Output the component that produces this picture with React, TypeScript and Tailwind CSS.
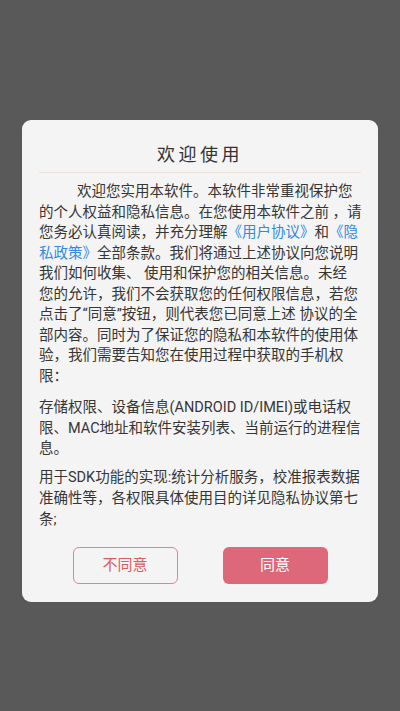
const textFont = { fontFamily: 'Roboto, "Noto Sans CJK SC", sans-serif' };

function Link({ children }: { children: React.ReactNode }) {
  return <span className="text-[#2f8ae5]">{children}</span>;
}

export default function App() {
  return (
    <div
      className="flex h-[711px] w-full items-start justify-center bg-[#595959] pt-[120px]"
      style={textFont}
    >
      <div className="flex h-[482px] w-[356px] flex-col rounded-[9px] bg-[#f4f4f4] px-[17px] pt-[23px] pb-[18px]">
        <h1 className="text-center text-[18px] leading-[24px] tracking-[3.5px] text-[#333]">
          欢迎使用
        </h1>
        <div className="mt-[5px] h-px bg-[#ebe1d6]" />

        <div className="mt-[9px] text-[14.5px] leading-[20.5px] whitespace-nowrap text-[#363636]">
          <p>
            <span className="pl-[38px]">欢迎您实用本软件。本软件非常重视保护您</span>
            <br />
            的个人权益和隐私信息。在您使用本软件之前 ，请
            <br />
            您务必认真阅读，并充分理解<Link>《用户协议》</Link>和<Link>《隐</Link>
            <br />
            <Link>私政策》</Link>全部条款。我们将通过上述协议向您说明
            <br />
            我们如何收集、 使用和保护您的相关信息。未经
            <br />
            您的允许，我们不会获取您的任何权限信息，若您
            <br />
            点击了“同意”按钮，则代表您已同意上述 协议的全
            <br />
            部内容。同时为了保证您的隐私和本软件的使用体
            <br />
            验，我们需要告知您在使用过程中获取的手机权
            <br />
            限：
          </p>
          <p className="mt-[11px]">
            存储权限、设备信息(ANDROID ID/IMEI)或电话权
            <br />
            限、MAC地址和软件安装列表、当前运行的进程信
            <br />
            息。
          </p>
          <p className="mt-[7px] leading-[21px]">
            用于SDK功能的实现:统计分析服务，校准报表数据
            <br />
            准确性等，各权限具体使用目的详见隐私协议第七
            <br />
            条;
          </p>
        </div>

        <div className="mt-auto flex justify-center gap-[45px]">
          <button className="h-[37px] w-[105px] rounded-[6px] border border-[#e28585] bg-transparent text-[15px] text-[#d85f5f]">
            不同意
          </button>
          <button className="h-[37px] w-[105px] rounded-[6px] bg-[#dc6879] text-[15px] text-white">
            同意
          </button>
        </div>
      </div>
    </div>
  );
}
